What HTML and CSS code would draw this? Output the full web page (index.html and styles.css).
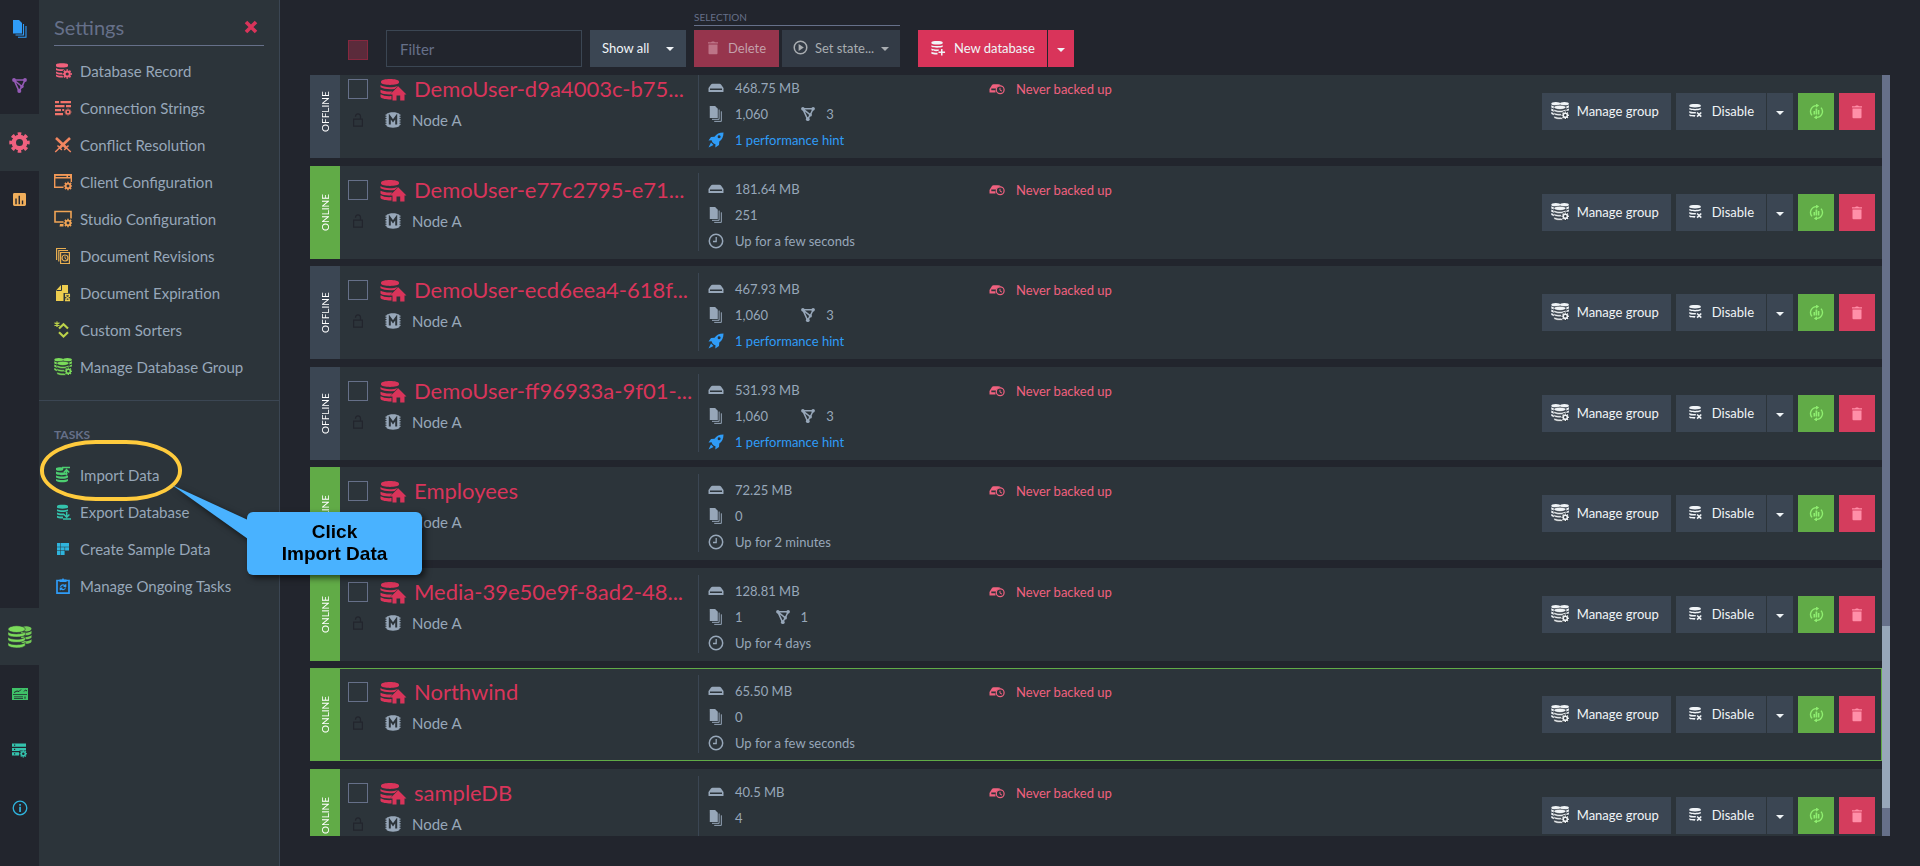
FILE: index.html
```html
<!DOCTYPE html>
<html lang="en">
<head>
<meta charset="utf-8">
<title>Databases</title>
<link rel="stylesheet" href="styles.css">
</head>
<body>
<svg class="sprite" aria-hidden="true">
  <defs>
    <g id="stack">
      <ellipse cx="6.5" cy="2.6" rx="6" ry="2.2"/>
      <path d="M.5 4.2C2 6.2 11 6.2 12.500 4.200V6.300C11 8.300 2 8.300.500 6.300Z"/>
      <path d="M.5 7.700C2 9.700 11 9.700 12.500 7.700V9.700C11 11.700 2 11.700.500 9.700Z"/>
      <path d="M.5 11.200C2 13.200 11 13.200 12.500 11.200V13.200C11 15.400 2 15.400.500 13.200Z"/>
    </g>
    <g id="cog">
      <circle r="2.6" fill="none" stroke="currentColor" stroke-width="2"/>
      <circle r="4" fill="none" stroke="currentColor" stroke-width="1.4" pathLength="16" stroke-dasharray="1.1 .9" stroke-dashoffset=".55"/>
    </g>
  </defs>
  <symbol id="i-docs" viewBox="0 0 14 18"><path d="M0 0h6l3 3v10.500H0z"/><path d="M10.500 4v11H2.500M13 6v11.300H5" fill="none" stroke="currentColor" stroke-width="1.100"/></symbol>
  <symbol id="i-graph" viewBox="0 0 15 15"><path d="M2 2H13L10 8.500 2 2 7 13 10 8.500" fill="none" stroke="currentColor" stroke-width="1.600"/><circle cx="2" cy="2" r="1.900"/><circle cx="13" cy="2" r="1.900"/><circle cx="7.300" cy="13" r="2"/><circle cx="10" cy="8.500" r="1.700"/></symbol>
  <symbol id="i-gear" viewBox="0 0 24 24"><circle cx="12" cy="12" r="6.500" fill="none" stroke="currentColor" stroke-width="5"/><circle cx="12" cy="12" r="9.800" fill="none" stroke="currentColor" stroke-width="3.800" pathLength="16" stroke-dasharray="1.050 .950" stroke-dashoffset=".525"/></symbol>
  <symbol id="i-stats" viewBox="0 0 14 14"><path fill-rule="evenodd" d="M1.500 0h11Q14 0 14 1.500v11Q14 14 12.500 14h-11Q0 14 0 12.500v-11Q0 0 1.500 0ZM2.500 6v6h1.500V6ZM6 3v9h1.500V3ZM9.500 8v4H11V8Z"/></symbol>
  <symbol id="i-dbs" viewBox="0 0 24 23"><g transform="translate(12.500 .200) scale(.880 1.220)" opacity=".9"><use href="#stack"/></g><g transform="translate(-.8 -.4) scale(1.450 1.540)" stroke="#2c343a" stroke-width=".4"><use href="#stack"/></g></symbol>
  <symbol id="i-monitor" viewBox="0 0 16 12"><path fill-rule="evenodd" d="M0 0h16v12H0ZM1 6.200v.8h14v-.8ZM2 8.500v.8h9v-.8ZM2 10v.8h9V10ZM12.500 8.500v2.300h1V8.500Z"/><path d="M2 4.500 5 3l2 .5L9 1.500M12 3.500l1.500-1.500L15 3" fill="none" stroke="#22252d" stroke-width="1"/></symbol>
  <symbol id="i-server" viewBox="0 0 15 14"><path fill-rule="evenodd" d="M0 0h14v3.200H0ZM2 1v1.200h1.200V1Z"/><path fill-rule="evenodd" d="M0 4.400h14V7H7.500v.600H0ZM2 5.300v1.200h1.200V5.300Z"/><path fill-rule="evenodd" d="M0 8.800h7V12H0ZM2 9.800V11h1.200V9.800Z"/><g transform="translate(11.300 10.300) scale(.780)"><use href="#cog"/></g></symbol>
  <symbol id="i-info" viewBox="0 0 16 16"><circle cx="8" cy="8" r="6.800" fill="none" stroke="currentColor" stroke-width="1.300"/><path d="M7.200 4h1.700v1.700H7.200ZM7.200 6.700h1.700V12H7.200Z"/></symbol>
  <symbol id="i-close" viewBox="0 0 14 14"><path d="M2 2 12 12M12 2 2 12" stroke="currentColor" stroke-width="3.600"/></symbol>
  <symbol id="i-dbcog" viewBox="0 0 18 18"><path d="M2 2.500C2 .700 14 .700 14 2.500V4C14 6 2 6 2 4Z"/><path d="M2 6c1 1.500 8 1.600 11 .700-3 .300-4 1.500-4.500 2.300C5 9 3 8.600 2 8ZM2 9.500c1 .900 3.500 1.300 6 1.200v1.800c-3 .100-5.500-.400-6-1.200ZM2 12.600c1 .900 3.500 1.300 6.500 1.200l.8 1.700c-3 .300-6.500-.200-7.300-1.300Z"/><g transform="translate(13.200 12)"><use href="#cog"/></g></symbol>
  <symbol id="i-strings" viewBox="0 0 18 16"><path d="M1 1h4v2.200H1ZM6.500 1H17v2.200H6.500ZM1 5h9.500v2.200H1ZM12 5h5v2.200h-5ZM1 9h6v2.200H1ZM8.200 9h2v2h-2ZM1 13h8v2.200H1Z"/><g transform="translate(14 12) scale(.720)"><use href="#cog"/></g></symbol>
  <symbol id="i-conflict" viewBox="0 0 18 16"><path d="M2 1 12.300 10.800M16 1 5.700 10.800" fill="none" stroke="currentColor" stroke-width="2.600"/><path d="M10.200 13 14.500 8.600M7.800 13 3.500 8.600M12.300 10.800l4.500 4.200M5.700 10.800 1.200 15" fill="none" stroke="currentColor" stroke-width="1.500"/></symbol>
  <symbol id="i-client" viewBox="0 0 18 16"><path d="M.7.7H17.300V8M.7.7V13.300H9.500" fill="none" stroke="currentColor" stroke-width="1.400"/><path fill-rule="evenodd" d="M0 0h18v4.500H0ZM1.500 1.700v1.300h11V1.700ZM14 1.700v1.300h2V1.700Z"/><g transform="translate(14 12) scale(.920)"><use href="#cog"/></g></symbol>
  <symbol id="i-studio" viewBox="0 0 18 17"><path d="M9.500 11.500H1V1H17V8" fill="none" stroke="currentColor" stroke-width="1.600"/><path d="M6 13.500h3.500v2.500H5.500Z"/><g transform="translate(14 12.500) scale(.920)"><use href="#cog"/></g></symbol>
  <symbol id="i-revisions" viewBox="0 0 18 17"><path d="M2.600 12.500V1H12M4.800 14V3H14" fill="none" stroke="currentColor" stroke-width="1.200"/><path d="M6.600 5H15.400V16H6.600Z" fill="none" stroke="currentColor" stroke-width="1.200"/><circle cx="11" cy="10.500" r="3" fill="none" stroke="currentColor" stroke-width="1.200"/><path d="M11 8.800v2l1.500 1" fill="none" stroke="currentColor"/></symbol>
  <symbol id="i-expire" viewBox="0 0 18 17"><path d="M2 6 7 .5H14V8.500H9.500V16.500H2Z"/><path d="M2.500 6H7.500V.5" fill="none" stroke="#2c343a"/><path d="M11 10h5M11 16h5M11.700 10v2l3.400 2v2M15.400 10v2l-3.400 2v2" fill="none" stroke="currentColor" stroke-width="1.300"/></symbol>
  <symbol id="i-sort" viewBox="0 0 18 17"><path d="M5 7 9.500 2.800 14 7M5 10.800l4.500 4.200L14 10.800" fill="none" stroke="currentColor" stroke-width="2.200"/><path d="M3 0v5.400M.5 1.300l5 2.800M5.500 1.300l-5 2.800" stroke="currentColor" stroke-width="1.300"/></symbol>
  <symbol id="i-group" viewBox="0 0 18 18"><ellipse cx="4.800" cy="1.700" rx="4.500" ry="1.600"/><ellipse cx="13.400" cy="1.700" rx="4.500" ry="1.600"/><path d="M.3 3.200 3 4.500V6.500L.3 5.400ZM.3 6.600 3 7.800v2L.3 8.700ZM.3 10 3 11.200v2L.3 12ZM17.900 3.200 15.200 4.500v2l2.700-1.100ZM17.900 6.600 15.200 7.800V9l2.700-.5Z"/><g transform="translate(2.400 2.800) scale(1 .980)" stroke="#2c343a" stroke-width=".5"><use href="#stack"/></g><circle cx="14.200" cy="13.300" r="4.300" fill="#2c343a"/><g transform="translate(14.300 13.300) scale(.800)"><use href="#cog"/></g></symbol>
  <symbol id="i-import" viewBox="0 0 18 17"><path d="M2 1.500C4 .500 8 .500 9.500 1.300L9 3.800C6 4.700 3 4.500 2 3.500ZM2 5c2 1 5 1.200 8.500.800L14 7.200V7c-2 2-9 2.300-12 .500ZM2 9c3 1.300 9 1.300 12 0v2c-2 1.800-9 1.800-12 0ZM2 12.500c3 1.300 9 1.300 12 0v1.800c-2 2-9 2-12 0Z"/><path d="M8 1h8M12.500 9V3.500M9.800 6l2.700-2.800L15.200 6" fill="none" stroke="currentColor" stroke-width="1.500"/></symbol>
  <symbol id="i-export" viewBox="0 0 18 17"><path d="M3 2.500C3 .700 14 .700 14 2.500V4C14 5.500 3 5.500 3 4ZM3 5.800c3 1.300 8 1.300 11 0v1.700c-3 1.300-8 1.300-11 0ZM3 9c2 1 4 1.200 7 1l1 1.500c-3 .500-7 .200-8-.700ZM3 12.200c2 .800 4 1 6 .800V15c-3 .100-5-.300-6-1Z"/><path d="M12.700 8.500v5M10 11l2.700 2.700L15.400 11M9 15.500h8" fill="none" stroke="currentColor" stroke-width="1.500"/></symbol>
  <symbol id="i-sample" viewBox="0 0 18 16"><path d="M3 2h3.500v3.700H3ZM7 2H15v3.700H7ZM3 6.200h3.500v3.400H3ZM7 6.200h3.600v3.400H7ZM11.100 6.200H15v3.400h-3.900ZM3 10.100h3.500V14H3ZM7 10.100h3.600V14H7Z"/></symbol>
  <symbol id="i-tasks" viewBox="0 0 18 17"><path d="M3 3H15V15.700H3Z" fill="none" stroke="currentColor" stroke-width="1.700"/><path d="M5.500 4.500V2H8Q9-.300 10 2h2.500v2.500Z"/><path d="M6.500 9.500a2.700 2.700 0 0 1 5-.8M11.500 10a2.700 2.700 0 0 1-5 .8M11.700 6.700v2.200H9.500M6.300 12.800v-2.200h2.200" fill="none" stroke="currentColor" stroke-width="1.200"/></symbol>
  <symbol id="i-dbhome" viewBox="0 0 27 23"><path d="M1 3.500C1 0 19 0 19 3.500V4.500C19 7.700 1 7.700 1 4.500Z"/><path d="M.500 7c3 2.500 12 2.800 17.500.900L14.500 11C9 11.500 3 11 .500 9.300ZM.500 11.700c3 1.600 7 2 12 1.700l-2.500 3C6 16.500 2 16 .500 14.500ZM.500 16.300c3 1.600 6 2 11 1.800v3.300C7 21.500 2 21 .500 19Z"/><path d="M18.200 8.200 26.500 16.500H24.500V22.500H20.200V17.500H16.500V22.500H12.500V16.500H10Z"/></symbol>
  <symbol id="i-lock" viewBox="0 0 12 14"><path d="M1.600 6.200H10.400V13.200H1.600ZM3.500 3.800C3.500 0 8.500 0 8.500 3.500V6" fill="none" stroke="currentColor" stroke-width="1.200"/></symbol>
  <symbol id="i-member" viewBox="0 0 16 16"><path d="M1.500 2C4 -.2 12-.2 14.500 2V14C12 16.200 4 16.200 1.500 14Z"/><path d="M1.200 2.500v11.500M14.800 2.500v11.500" stroke="currentColor" stroke-width="1.400" stroke-dasharray="1.300 1"/><path d="M4.800 12.500V4.500L8 8.800l3.200-4.300v8" fill="none" stroke="#2c343a" stroke-width="2"/></symbol>
  <symbol id="i-disk" viewBox="0 0 16 10"><path fill-rule="evenodd" d="M.5 5 3 1.500Q3.500.8 4.500.8h7q1 0 1.500.7L15.500 5V8.500Q15.500 9 15 9H1Q.5 9 .5 8.500ZM2 5.500v1.600H14V5.500Z"/></symbol>
  <symbol id="i-rocket" viewBox="0 0 16 16"><path fill-rule="evenodd" d="M15.500.5C11 .5 8.500 2 6.500 4.700L3 5 .5 8.500 3.700 8.300C3.400 9.500 6 12.300 7.500 12.200L7.300 15.500 11 13l.3-3.500C14 7.500 15.500 5 15.500.5ZM11.200 3.200a1.500 1.500 0 1 1-.100 3 1.500 1.500 0 0 1 .100-3Z"/><path d="M3 10.500.5 15.500 5.500 13Z"/></symbol>
  <symbol id="i-clock" viewBox="0 0 16 16"><circle cx="8" cy="8" r="6.700" fill="none" stroke="currentColor" stroke-width="1.500"/><path d="M8.200 4v4.500H5" fill="none" stroke="currentColor" stroke-width="1.300"/></symbol>
  <symbol id="i-backup" viewBox="0 0 16 11"><path d="M.5 9V5.500L3 1.500Q3.500.8 4.500.8H9Q11 .8 12 2C9 2 7.500 3.500 7 5H2.300v1.800H6.500V9Z"/><circle cx="11.200" cy="6.300" r="3.900" fill="none" stroke="currentColor" stroke-width="1.200"/><path d="M11 4.300v2.300l2 1" fill="none" stroke="currentColor"/></symbol>
  <symbol id="i-trash" viewBox="0 0 12 14"><path d="M1 1.200H4L5 .4H7L8 1.200h3v1.300H1ZM1.500 3.500h9V12.300Q10.500 13.200 9.600 13.200H2.400Q1.500 13.200 1.500 12.300Z"/></symbol>
  <symbol id="i-play" viewBox="0 0 16 16"><circle cx="8" cy="8" r="6.700" fill="none" stroke="currentColor" stroke-width="1.600"/><path d="M6 4.300 11.500 8 6 11.700Z"/></symbol>
  <symbol id="i-dbplus" viewBox="0 0 16 17"><path d="M1 2.500C1 .500 13 .500 13 2.500V3.500C13 5.300 1 5.300 1 3.500ZM1 5.500c3 1.300 9 1.300 12 0v1.700c-3 1.300-9 1.300-12 0ZM1 9c2 1 5 1.200 8 1l-.5 1.800C5 12 2 11.800 1 11ZM1 12.500c2 .900 4 1.100 6.500 1v1.800C5 15.400 2 15.200 1 14.500Z"/><path d="M12 9.500v7M8.500 13h7" stroke="currentColor" stroke-width="1.600"/></symbol>
  <symbol id="i-dboff" viewBox="0 0 16 17"><path d="M1 2.500C1 .500 14 .500 14 2.500V3.800C14 5.500 1 5.500 1 3.800ZM1 5.800c3 1.300 10 1.300 13 0v1.700c-3 1.300-10 1.300-13 0ZM1 9.200c2 1 5 1.200 7.500 1l-.3 1.800C5 12.100 2 11.800 1 11ZM1 12.700c2 .900 4 1.100 7 1l-.8 1.800C5 15.500 2 15.300 1 14.500Z"/><path d="M9.800 10.800l4.700 4.700M14.500 10.800l-4.700 4.700" stroke="currentColor" stroke-width="1.800"/></symbol>
  <symbol id="i-refresh" viewBox="0 0 16 16"><path d="M3.200 12.100A6.300 6.300 0 0 1 8 1.700M12.800 3.900A6.300 6.300 0 0 1 8 14.300" fill="none" stroke="currentColor" stroke-width="1.500"/><path d="M7.500-.6 10.800 1.700 7.500 4ZM8.500 16.600 5.200 14.300l3.300-2.300ZM4.800 7.500h1.600v3.700H4.800ZM7 4.800h1.800v6.400H7ZM9.500 6.500h1.600v4.700H9.500Z"/></symbol>
</svg>

<div class="app">
  <nav class="rail" aria-label="Main">
    <a class="rail-item blue" href="#" aria-label="Documents"><svg class="ic ic-docs"><use href="#i-docs"/></svg></a>
    <a class="rail-item purple" href="#" aria-label="Indexes"><svg class="ic ic-15"><use href="#i-graph"/></svg></a>
    <a class="rail-item pink active" href="#" aria-label="Settings"><svg class="ic ic-21"><use href="#i-gear"/></svg></a>
    <a class="rail-item orange" href="#" aria-label="Stats"><svg class="ic ic-13"><use href="#i-stats"/></svg></a>
    <span class="rail-gap"></span>
    <a class="rail-item lime active" href="#" aria-label="Databases"><svg class="ic ic-24"><use href="#i-dbs"/></svg></a>
    <a class="rail-item green" href="#" aria-label="Dashboard"><svg class="ic ic-16"><use href="#i-monitor"/></svg></a>
    <a class="rail-item teal" href="#" aria-label="Manage server"><svg class="ic ic-15"><use href="#i-server"/></svg></a>
    <a class="rail-item cyan" href="#" aria-label="About"><svg class="ic ic-16"><use href="#i-info"/></svg></a>
  </nav>

  <aside class="panel">
    <header class="panel-head"><h1>Settings</h1><button class="close" aria-label="Close"><svg class="ic ic-14"><use href="#i-close"/></svg></button></header>
    <ul class="menu">
      <li><a href="#"><svg class="ic ic-18 c1"><use href="#i-dbcog"/></svg>Database Record</a></li>
      <li><a href="#"><svg class="ic ic-18 c2"><use href="#i-strings"/></svg>Connection Strings</a></li>
      <li><a href="#"><svg class="ic ic-18 c3"><use href="#i-conflict"/></svg>Conflict Resolution</a></li>
      <li><a href="#"><svg class="ic ic-18 c4"><use href="#i-client"/></svg>Client Configuration</a></li>
      <li><a href="#"><svg class="ic ic-18 c5"><use href="#i-studio"/></svg>Studio Configuration</a></li>
      <li><a href="#"><svg class="ic ic-18 c6"><use href="#i-revisions"/></svg>Document Revisions</a></li>
      <li><a href="#"><svg class="ic ic-18 c7"><use href="#i-expire"/></svg>Document Expiration</a></li>
      <li><a href="#"><svg class="ic ic-18 c8"><use href="#i-sort"/></svg>Custom Sorters</a></li>
      <li><a href="#"><svg class="ic ic-18 lime"><use href="#i-group"/></svg>Manage Database Group</a></li>
    </ul>
    <h2 class="tasks">TASKS</h2>
    <ul class="menu">
      <li class="marked"><a href="#"><svg class="ic ic-18 c9"><use href="#i-import"/></svg>Import Data</a>
        <span class="ring"></span>
        <div class="callout">
          <svg class="tail" viewBox="0 0 76 54"><path d="M0 0 76 35V54Z"/></svg>
          <p>Click<br>Import Data</p>
        </div>
      </li>
      <li><a href="#"><svg class="ic ic-18 teal"><use href="#i-export"/></svg>Export Database</a></li>
      <li><a href="#"><svg class="ic ic-18 cyan"><use href="#i-sample"/></svg>Create Sample Data</a></li>
      <li><a href="#"><svg class="ic ic-18 blue"><use href="#i-tasks"/></svg>Manage Ongoing Tasks</a></li>
    </ul>
  </aside>

  <main class="main">
    <div class="toolbar">
      <input class="check check-all" type="checkbox" aria-label="Select all">
      <input class="filter" type="text" placeholder="Filter" aria-label="Filter">
      <button class="btn show">Show all<span class="caret"></span></button>
      <div class="selection">
        <span class="selection-label">SELECTION</span>
        <div class="selection-buttons">
          <button class="btn del" disabled><svg class="ic ic-trash"><use href="#i-trash"/></svg>Delete</button>
          <button class="btn state" disabled><svg class="ic ic-15"><use href="#i-play"/></svg>Set state...<span class="caret"></span></button>
        </div>
      </div>
      <div class="split">
        <button class="btn new"><svg class="ic ic-16"><use href="#i-dbplus"/></svg>New database</button>
        <button class="btn new drop" aria-label="More"><span class="caret"></span></button>
      </div>
    </div>

    <div class="viewport">
      <div class="list">
        <article class="card">
          <div class="status offline">OFFLINE</div>
          <div class="ident"><input class="check" type="checkbox" aria-label="Select"><a class="name" href="#"><svg class="ic ic-home"><use href="#i-dbhome"/></svg>DemoUser-d9a4003c-b75...</a><svg class="ic lock"><use href="#i-lock"/></svg><span class="node"><svg class="ic ic-16"><use href="#i-member"/></svg>Node A</span></div>
          <ul class="stats"><li><svg class="ic ic-16"><use href="#i-disk"/></svg>468.75 MB</li><li><svg class="ic ic-16"><use href="#i-docs"/></svg>1,060<svg class="ic ic-14 graph"><use href="#i-graph"/></svg>3</li><li class="hint"><svg class="ic ic-16"><use href="#i-rocket"/></svg>1 performance hint</li></ul>
          <div class="backup"><svg class="ic ic-16"><use href="#i-backup"/></svg>Never backed up</div>
          <div class="actions"><button class="btn group"><svg class="ic ic-18"><use href="#i-group"/></svg>Manage group</button><div class="split"><button class="btn"><svg class="ic ic-15"><use href="#i-dboff"/></svg>Disable</button><button class="btn drop" aria-label="More"><span class="caret"></span></button></div><button class="btn sq go" aria-label="Refresh"><svg class="ic ic-15"><use href="#i-refresh"/></svg></button><button class="btn sq kill" aria-label="Delete"><svg class="ic ic-trash"><use href="#i-trash"/></svg></button></div>
        </article>
        <article class="card">
          <div class="status online">ONLINE</div>
          <div class="ident"><input class="check" type="checkbox" aria-label="Select"><a class="name" href="#"><svg class="ic ic-home"><use href="#i-dbhome"/></svg>DemoUser-e77c2795-e71...</a><svg class="ic lock"><use href="#i-lock"/></svg><span class="node"><svg class="ic ic-16"><use href="#i-member"/></svg>Node A</span></div>
          <ul class="stats"><li><svg class="ic ic-16"><use href="#i-disk"/></svg>181.64 MB</li><li><svg class="ic ic-16"><use href="#i-docs"/></svg>251</li><li><svg class="ic ic-16"><use href="#i-clock"/></svg>Up for a few seconds</li></ul>
          <div class="backup"><svg class="ic ic-16"><use href="#i-backup"/></svg>Never backed up</div>
          <div class="actions"><button class="btn group"><svg class="ic ic-18"><use href="#i-group"/></svg>Manage group</button><div class="split"><button class="btn"><svg class="ic ic-15"><use href="#i-dboff"/></svg>Disable</button><button class="btn drop" aria-label="More"><span class="caret"></span></button></div><button class="btn sq go" aria-label="Refresh"><svg class="ic ic-15"><use href="#i-refresh"/></svg></button><button class="btn sq kill" aria-label="Delete"><svg class="ic ic-trash"><use href="#i-trash"/></svg></button></div>
        </article>
        <article class="card">
          <div class="status offline">OFFLINE</div>
          <div class="ident"><input class="check" type="checkbox" aria-label="Select"><a class="name" href="#"><svg class="ic ic-home"><use href="#i-dbhome"/></svg>DemoUser-ecd6eea4-618f...</a><svg class="ic lock"><use href="#i-lock"/></svg><span class="node"><svg class="ic ic-16"><use href="#i-member"/></svg>Node A</span></div>
          <ul class="stats"><li><svg class="ic ic-16"><use href="#i-disk"/></svg>467.93 MB</li><li><svg class="ic ic-16"><use href="#i-docs"/></svg>1,060<svg class="ic ic-14 graph"><use href="#i-graph"/></svg>3</li><li class="hint"><svg class="ic ic-16"><use href="#i-rocket"/></svg>1 performance hint</li></ul>
          <div class="backup"><svg class="ic ic-16"><use href="#i-backup"/></svg>Never backed up</div>
          <div class="actions"><button class="btn group"><svg class="ic ic-18"><use href="#i-group"/></svg>Manage group</button><div class="split"><button class="btn"><svg class="ic ic-15"><use href="#i-dboff"/></svg>Disable</button><button class="btn drop" aria-label="More"><span class="caret"></span></button></div><button class="btn sq go" aria-label="Refresh"><svg class="ic ic-15"><use href="#i-refresh"/></svg></button><button class="btn sq kill" aria-label="Delete"><svg class="ic ic-trash"><use href="#i-trash"/></svg></button></div>
        </article>
        <article class="card">
          <div class="status offline">OFFLINE</div>
          <div class="ident"><input class="check" type="checkbox" aria-label="Select"><a class="name" href="#"><svg class="ic ic-home"><use href="#i-dbhome"/></svg>DemoUser-ff96933a-9f01-...</a><svg class="ic lock"><use href="#i-lock"/></svg><span class="node"><svg class="ic ic-16"><use href="#i-member"/></svg>Node A</span></div>
          <ul class="stats"><li><svg class="ic ic-16"><use href="#i-disk"/></svg>531.93 MB</li><li><svg class="ic ic-16"><use href="#i-docs"/></svg>1,060<svg class="ic ic-14 graph"><use href="#i-graph"/></svg>3</li><li class="hint"><svg class="ic ic-16"><use href="#i-rocket"/></svg>1 performance hint</li></ul>
          <div class="backup"><svg class="ic ic-16"><use href="#i-backup"/></svg>Never backed up</div>
          <div class="actions"><button class="btn group"><svg class="ic ic-18"><use href="#i-group"/></svg>Manage group</button><div class="split"><button class="btn"><svg class="ic ic-15"><use href="#i-dboff"/></svg>Disable</button><button class="btn drop" aria-label="More"><span class="caret"></span></button></div><button class="btn sq go" aria-label="Refresh"><svg class="ic ic-15"><use href="#i-refresh"/></svg></button><button class="btn sq kill" aria-label="Delete"><svg class="ic ic-trash"><use href="#i-trash"/></svg></button></div>
        </article>
        <article class="card">
          <div class="status online">ONLINE</div>
          <div class="ident"><input class="check" type="checkbox" aria-label="Select"><a class="name" href="#"><svg class="ic ic-home"><use href="#i-dbhome"/></svg>Employees</a><svg class="ic lock"><use href="#i-lock"/></svg><span class="node"><svg class="ic ic-16"><use href="#i-member"/></svg>Node A</span></div>
          <ul class="stats"><li><svg class="ic ic-16"><use href="#i-disk"/></svg>72.25 MB</li><li><svg class="ic ic-16"><use href="#i-docs"/></svg>0</li><li><svg class="ic ic-16"><use href="#i-clock"/></svg>Up for 2 minutes</li></ul>
          <div class="backup"><svg class="ic ic-16"><use href="#i-backup"/></svg>Never backed up</div>
          <div class="actions"><button class="btn group"><svg class="ic ic-18"><use href="#i-group"/></svg>Manage group</button><div class="split"><button class="btn"><svg class="ic ic-15"><use href="#i-dboff"/></svg>Disable</button><button class="btn drop" aria-label="More"><span class="caret"></span></button></div><button class="btn sq go" aria-label="Refresh"><svg class="ic ic-15"><use href="#i-refresh"/></svg></button><button class="btn sq kill" aria-label="Delete"><svg class="ic ic-trash"><use href="#i-trash"/></svg></button></div>
        </article>
        <article class="card">
          <div class="status online">ONLINE</div>
          <div class="ident"><input class="check" type="checkbox" aria-label="Select"><a class="name" href="#"><svg class="ic ic-home"><use href="#i-dbhome"/></svg>Media-39e50e9f-8ad2-48...</a><svg class="ic lock"><use href="#i-lock"/></svg><span class="node"><svg class="ic ic-16"><use href="#i-member"/></svg>Node A</span></div>
          <ul class="stats"><li><svg class="ic ic-16"><use href="#i-disk"/></svg>128.81 MB</li><li><svg class="ic ic-16"><use href="#i-docs"/></svg>1<svg class="ic ic-14 graph"><use href="#i-graph"/></svg>1</li><li><svg class="ic ic-16"><use href="#i-clock"/></svg>Up for 4 days</li></ul>
          <div class="backup"><svg class="ic ic-16"><use href="#i-backup"/></svg>Never backed up</div>
          <div class="actions"><button class="btn group"><svg class="ic ic-18"><use href="#i-group"/></svg>Manage group</button><div class="split"><button class="btn"><svg class="ic ic-15"><use href="#i-dboff"/></svg>Disable</button><button class="btn drop" aria-label="More"><span class="caret"></span></button></div><button class="btn sq go" aria-label="Refresh"><svg class="ic ic-15"><use href="#i-refresh"/></svg></button><button class="btn sq kill" aria-label="Delete"><svg class="ic ic-trash"><use href="#i-trash"/></svg></button></div>
        </article>
        <article class="card current">
          <div class="status online">ONLINE</div>
          <div class="ident"><input class="check" type="checkbox" aria-label="Select"><a class="name" href="#"><svg class="ic ic-home"><use href="#i-dbhome"/></svg>Northwind</a><svg class="ic lock"><use href="#i-lock"/></svg><span class="node"><svg class="ic ic-16"><use href="#i-member"/></svg>Node A</span></div>
          <ul class="stats"><li><svg class="ic ic-16"><use href="#i-disk"/></svg>65.50 MB</li><li><svg class="ic ic-16"><use href="#i-docs"/></svg>0</li><li><svg class="ic ic-16"><use href="#i-clock"/></svg>Up for a few seconds</li></ul>
          <div class="backup"><svg class="ic ic-16"><use href="#i-backup"/></svg>Never backed up</div>
          <div class="actions"><button class="btn group"><svg class="ic ic-18"><use href="#i-group"/></svg>Manage group</button><div class="split"><button class="btn"><svg class="ic ic-15"><use href="#i-dboff"/></svg>Disable</button><button class="btn drop" aria-label="More"><span class="caret"></span></button></div><button class="btn sq go" aria-label="Refresh"><svg class="ic ic-15"><use href="#i-refresh"/></svg></button><button class="btn sq kill" aria-label="Delete"><svg class="ic ic-trash"><use href="#i-trash"/></svg></button></div>
        </article>
        <article class="card">
          <div class="status online">ONLINE</div>
          <div class="ident"><input class="check" type="checkbox" aria-label="Select"><a class="name" href="#"><svg class="ic ic-home"><use href="#i-dbhome"/></svg>sampleDB</a><svg class="ic lock"><use href="#i-lock"/></svg><span class="node"><svg class="ic ic-16"><use href="#i-member"/></svg>Node A</span></div>
          <ul class="stats"><li><svg class="ic ic-16"><use href="#i-disk"/></svg>40.5 MB</li><li><svg class="ic ic-16"><use href="#i-docs"/></svg>4</li></ul>
          <div class="backup"><svg class="ic ic-16"><use href="#i-backup"/></svg>Never backed up</div>
          <div class="actions"><button class="btn group"><svg class="ic ic-18"><use href="#i-group"/></svg>Manage group</button><div class="split"><button class="btn"><svg class="ic ic-15"><use href="#i-dboff"/></svg>Disable</button><button class="btn drop" aria-label="More"><span class="caret"></span></button></div><button class="btn sq go" aria-label="Refresh"><svg class="ic ic-15"><use href="#i-refresh"/></svg></button><button class="btn sq kill" aria-label="Delete"><svg class="ic ic-trash"><use href="#i-trash"/></svg></button></div>
        </article>
      </div>
      <div class="scrollbar"><div class="thumb"></div></div>
    </div>
  </main>
</div>
</body>
</html>
```

FILE: styles.css
```css
:root {
  --bg: #22252d;
  --surface: #2c343a;
  --button: #3b4653;
  --muted: #667089;
  --text: #97a7b9;
  --red: #d9345a;
  --pink: #f0617f;
  --green: #61ab47;
}

* { box-sizing: border-box; }

body {
  margin: 0;
  background: var(--bg);
  color: var(--text);
  font: 13px/20px Lato, sans-serif;
}

a { color: inherit; text-decoration: none; }
ul { list-style: none; margin: 0; padding: 0; }

.sprite { position: absolute; width: 0; height: 0; }
.ic { flex: none; display: block; fill: currentColor; overflow: visible; }
.ic-docs { width: 14px; height: 18px; }
.ic-13 { width: 13px; height: 13px; }
.ic-14 { width: 14px; height: 14px; }
.ic-15 { width: 15px; height: 15px; }
.ic-16 { width: 16px; height: 16px; }
.ic-18 { width: 18px; height: 18px; }
.ic-21 { width: 21px; height: 21px; }
.ic-24 { width: 24px; height: 24px; }
.ic-home { width: 27px; height: 23px; }
.ic-trash { width: 12px; height: 14px; }

.blue { color: #2f9cf7; }
.purple { color: #945ab5; }
.pink { color: #f0617f; }
.orange { color: #f0ae5b; }
.lime { color: #7bdc5a; }
.green { color: #3fc168; }
.teal { color: #34c3ad; }
.cyan { color: #2fb4dd; }
.c1 { color: #f2617c; }
.c2 { color: #f2746b; }
.c3 { color: #f28660; }
.c4 { color: #f29957; }
.c5 { color: #f0a455; }
.c6 { color: #e8ae50; }
.c7 { color: #edcd4f; }
.c8 { color: #bcd24a; }
.c9 { color: #4dcf71; }

.app { display: flex; height: 100vh; }

.rail {
  display: flex;
  flex-direction: column;
  flex: none;
  width: 39px;
  padding-bottom: 30px;
}
.rail-item { display: flex; align-items: center; justify-content: center; height: 57px; }
.rail-item.active { background: var(--surface); }
.rail-gap { flex: 1; }

.panel {
  flex: none;
  width: 241px;
  background: var(--surface);
  border-right: 1px solid var(--button);
}
.panel-head {
  display: flex;
  align-items: center;
  justify-content: space-between;
  height: 46px;
  margin: 0 15px 6px;
  padding: 8px 6px 0 0;
  border-bottom: 1px solid var(--muted);
}
.panel-head h1 { margin: 0; color: var(--muted); font-size: 20px; font-weight: 400; }
.close { padding: 0; border: 0; background: none; color: var(--red); }

.menu li { position: relative; }
.menu a {
  display: flex;
  align-items: center;
  gap: 8px;
  height: 37px;
  padding-left: 15px;
  font-size: 15px;
}
.tasks {
  margin: 15px 0 11px;
  padding: 24px 15px 0;
  border-top: 1px solid var(--button);
  color: var(--muted);
  font-size: 12px;
  font-weight: 700;
  line-height: 20px;
}

.ring {
  position: absolute;
  top: -16px;
  left: 1px;
  width: 142px;
  height: 61px;
  border: 4px solid #ffcb3d;
  border-radius: 56px / 30px;
  pointer-events: none;
}
.callout {
  position: absolute;
  z-index: 2;
  top: 56px;
  left: 208px;
  width: 175px;
  padding: 9px 0 10px;
  border-radius: 6px;
  background: #49b2ff;
  color: #000;
  font: 700 19px/22px "Liberation Sans", Arial, sans-serif;
  text-align: center;
  filter: drop-shadow(3px 3px 3px rgba(0, 0, 0, .6));
}
.callout p { margin: 0; }
.tail { position: absolute; top: -27px; left: -75px; width: 76px; height: 54px; fill: #49b2ff; }

.main {
  display: flex;
  flex-direction: column;
  flex: 1;
  min-width: 0;
  padding: 0 30px;
}

.toolbar {
  display: flex;
  align-items: flex-end;
  gap: 8px;
  height: 75px;
  padding: 0 0 8px 38px;
}

.check {
  appearance: none;
  width: 20px;
  height: 20px;
  margin: 0;
  border: 1px solid var(--muted);
}
.check-all { margin: 0 10px 7px 0; border-color: #87283f; background: #5b2b3b; }

.filter {
  width: 196px;
  height: 37px;
  padding: 0 13px;
  border: 1px solid var(--button);
  background: none;
  color: var(--text);
  font: 15px/20px Lato, sans-serif;
}
.filter::placeholder { color: var(--muted); opacity: 1; }

.btn {
  display: flex;
  align-items: center;
  justify-content: center;
  gap: 9px;
  height: 37px;
  padding: 0 12px 2px;
  border: 0;
  background: var(--button);
  color: #f0f4f7;
  font: 13px/20px Lato, sans-serif;
  white-space: nowrap;
}
.caret { margin-top: 3px; border: 4px solid transparent; border-top-color: currentColor; border-bottom: 0; }
.show { width: 96px; justify-content: space-between; }

.selection-label {
  display: block;
  margin-bottom: 4px;
  border-bottom: 1px solid var(--muted);
  color: var(--muted);
  font-size: 10px;
  line-height: 16px;
}
.selection-buttons { display: flex; gap: 3px; }
.del { width: 85px; background: #96354d; color: #c4a0aa; }
.del .ic { color: #bd7487; }
.state { width: 118px; gap: 7px; background: #333b46; color: #a9adb1; }

.split { display: flex; gap: 1px; }
.toolbar > .split { margin-left: 10px; }
.new { gap: 8px; background: var(--red); }
.drop { width: 26px; padding: 0; }

.viewport { display: flex; flex: 1; min-height: 0; margin-bottom: 30px; }
.list { flex: 1; min-width: 0; overflow: hidden; }

.card {
  display: grid;
  grid-template-columns: 30px minmax(0, 358px) minmax(0, 290px) minmax(130px, 1fr) auto;
  min-height: 93px;
  margin-bottom: 8px;
  background: var(--surface);
}
.card:nth-child(even) { margin-bottom: 7px; }
.card:first-child { margin-top: -10px; }
.card.current { box-shadow: inset 0 0 0 1px var(--green); }

.status {
  display: flex;
  align-items: center;
  justify-content: center;
  color: #fff;
  font-size: 10px;
  writing-mode: vertical-rl;
  transform: rotate(180deg);
}
.offline { background: var(--button); }
.online { background: var(--green); }

.ident {
  display: grid;
  grid-template-columns: 20px minmax(0, 1fr);
  grid-template-rows: 28px 28px;
  row-gap: 3px;
  column-gap: 12px;
  align-items: center;
  padding: 10px 0 0 8px;
}
.name {
  display: flex;
  align-items: center;
  gap: 7px;
  overflow: hidden;
  color: var(--red);
  font-size: 22px;
  line-height: 28px;
  white-space: nowrap;
}
.lock { width: 12px; height: 14px; justify-self: center; color: #22252d; }
.node { display: flex; align-items: center; gap: 11px; padding-left: 5px; font-size: 15px; }

.stats {
  display: flex;
  flex-direction: column;
  gap: 6px;
  margin: 7px 0 8px;
  padding: 6px 0 0 9px;
  border-left: 1px solid var(--button);
}
.stats li { display: flex; align-items: center; gap: 11px; height: 20px; }
.graph { margin-left: 22px; }
.hint { color: #2f9cf7; }

.backup {
  display: flex;
  align-items: center;
  align-self: start;
  gap: 11px;
  height: 26px;
  margin: 11px 0 0 1px;
  color: var(--pink);
}

.actions { display: flex; align-items: flex-start; gap: 5px; padding: 28px 7px 0 0; }
.group { gap: 8px; padding: 0 12px 2px 9px; }
.sq { width: 36px; padding: 0; }
.go { background: var(--green); color: #8fee70; }
.kill { background: #d43d5d; color: #ff8fa8; }

.scrollbar { width: 8px; padding-top: 551px; background: var(--muted); }
.thumb { height: 182px; background: var(--text); }
```
